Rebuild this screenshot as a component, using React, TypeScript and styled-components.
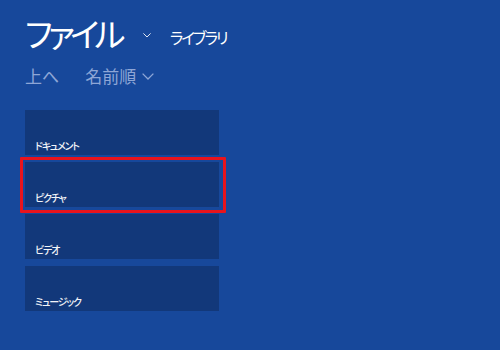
import React from "react";
import styled, { createGlobalStyle } from "styled-components";

const GlobalStyle = createGlobalStyle`
    html, body {
        margin: 0;
        padding: 0;
        background: #17489b;
    }
    body {
        font-family: "Noto Sans CJK JP", "Noto Sans", sans-serif;
        font-feature-settings: "palt";
    }
`;

const LIBRARIES = ["ドキュメント", "ピクチャ", "ビデオ", "ミュージック"];

const Chevron: React.FC<{ size?: number; color?: string }> = ({ size = 10, color = "#fff" }) => (
    <svg width={size} height={size * 0.6} viewBox="0 0 10 6" fill="none">
        <polyline points="0.5,0.5 5,5 9.5,0.5" stroke={color} strokeWidth="1.1" />
    </svg>
);

const App: React.FC = () => {
    return (
        <>
            <GlobalStyle />
            <Page>
                <TitleRow>
                    <Title>ファイル</Title>
                    <TitleChevron>
                        <Chevron size={8} />
                    </TitleChevron>
                    <SubTitle>ライブラリ</SubTitle>
                </TitleRow>
                <SortRow>
                    <SortItem>上へ</SortItem>
                    <SortItem>
                        名前順
                        <Chevron size={12} color="#8ea6d6" />
                    </SortItem>
                </SortRow>
                <TileList>
                    {LIBRARIES.map((name, i) => (
                        <Tile key={name} $selected={i === 1}>
                            <TileLabel>{name}</TileLabel>
                        </Tile>
                    ))}
                </TileList>
            </Page>
        </>
    );
};

const Page = styled.div`
    width: 500px;
    height: 350px;
    box-sizing: border-box;
    padding: 12px 0 0 25px;
    background: #17489b;
    overflow: hidden;
`;

const TitleRow = styled.div`
    display: flex;
    align-items: center;
    height: 42px;
`;

const Title = styled.h1`
    margin: 0;
    font-size: 33px;
    font-weight: 400;
    line-height: 42px;
    color: #ffffff;
    letter-spacing: -4.6px;
`;

const TitleChevron = styled.span`
    display: inline-flex;
    margin-left: 22px;
    padding-top: 5px;
`;

const SubTitle = styled.span`
    margin-left: 19px;
    padding-top: 8px;
    font-size: 15.5px;
    line-height: 20px;
    letter-spacing: -2px;
    color: #ffffff;
`;

const SortRow = styled.div`
    display: flex;
    gap: 26px;
    margin-top: 8px;
    height: 26px;
    align-items: center;
`;

const SortItem = styled.span`
    display: inline-flex;
    align-items: center;
    gap: 6px;
    font-size: 17px;
    color: #8ea6d6;

    svg {
        margin-top: 4px;
    }
`;

const TileList = styled.div`
    display: flex;
    flex-direction: column;
    gap: 7px;
    margin-top: 22px;
    width: 194px;
`;

const Tile = styled.div<{ $selected?: boolean }>`
    position: relative;
    height: 45px;
    background: #12387a;
    display: flex;
    align-items: flex-end;
    padding: 0 0 2px 10px;
    box-sizing: border-box;

    ${({ $selected }) =>
        $selected &&
        `
        &::after {
            content: "";
            position: absolute;
            left: -5px;
            right: -7px;
            top: -5px;
            bottom: -6px;
            border: 3px solid #e8141c;
            border-radius: 1px;
        }
    `}
`;

const TileLabel = styled.span`
    font-size: 10px;
    line-height: 14px;
    color: #f2f4f8;
    font-weight: 500;
    letter-spacing: -1.2px;
`;

export default App;
